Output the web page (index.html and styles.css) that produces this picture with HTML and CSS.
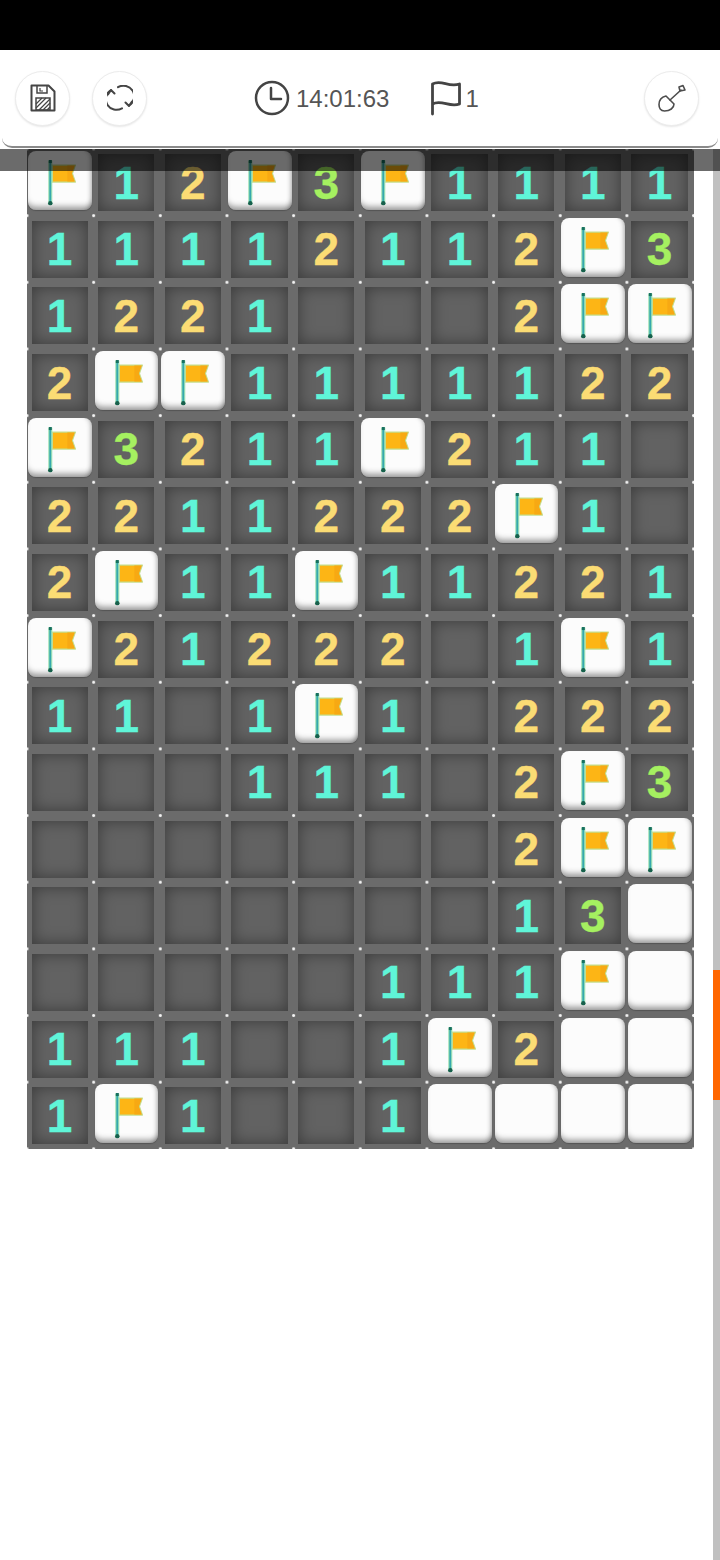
FILE: index.html
```html
<!DOCTYPE html>
<html lang="en">
<head>
    <meta charset="UTF-8" />
    <meta name="viewport" content="width=device-width, initial-scale=1.0" />
    <title>Minesweeper</title>
    <link rel="stylesheet" href="styles.css">
</head>
<body>
    <svg class="defs" width="0" height="0">
        <symbol id="flag" viewBox="0 0 63 59">
            <path d="M24 14h23l-3 8.500 3 8.500H24z" fill="#fdb515" stroke="#c3dd8c" stroke-width="1.300" stroke-linejoin="round" />
            <path d="M39 14.500h7.500l-3 8 3 8H39z" fill="#f7a913" />
            <rect x="20.500" y="10" width="3" height="43" fill="#35a9ad" stroke="#a8e6b4" stroke-width="1" />
            <rect x="20.500" y="9" width="3" height="3" fill="#17705f" />
            <circle cx="22" cy="52" r="2.200" fill="#17604c" />
        </symbol>
    </svg>

    <div class="status-bar"></div>

    <header class="toolbar">
        <button class="round-btn" aria-label="Save">
            <svg width="26" height="28" viewBox="0 0 26 28" fill="none" stroke="#454545" stroke-width="2">
                <path d="M1.500 1.500h17l6 6v19h-23z" stroke-linejoin="round" />
                <path d="M7 2v7h10V2" stroke-width="1.500" />
                <path d="M10 4v3h3" stroke-width="1.200" />
                <rect x="6" y="14" width="14" height="12" stroke-width="1.500" />
                <path d="M6 20l6-6M6 24l10-10M9 26l11-11M13 26l7-7M17 26l3-3" stroke-width="1.200" />
            </svg>
        </button>
        <button class="round-btn" aria-label="Restart">
            <svg width="26" height="26" viewBox="0 0 26 26" fill="none" stroke="#454545" stroke-width="2" stroke-linecap="round" stroke-linejoin="round">
                <path d="M11 2.200A10.500 10.500 0 0 1 22 20.500" />
                <path d="M18.500 17.500l3.500 3.500 3-4.500" />
                <path d="M15 23.300A10.500 10.500 0 0 1 4 5" />
                <path d="M1 9.500l3-4.500 3.500 3.500" />
            </svg>
        </button>

        <div class="game-status">
            <svg width="36" height="36" viewBox="0 0 36 36" fill="none" stroke="#444" stroke-width="2.500" stroke-linecap="round" stroke-linejoin="round">
                <circle cx="18" cy="18" r="16" />
                <path d="M17 8v11h10" />
            </svg>
            <span class="timer">14:01:63</span>
            <svg class="flag-icon" width="32" height="36" viewBox="0 0 32 36" fill="none" stroke="#444" stroke-width="2.800" stroke-linecap="round" stroke-linejoin="round">
                <path d="M2.500 34V4c9-5 16 4 27 0v20c-10 4-18-5-27 0" />
            </svg>
            <span class="flag-count">1</span>
        </div>

        <button class="round-btn shovel-btn" aria-label="Dig">
            <svg width="28" height="28" viewBox="0 0 28 28" fill="none" stroke="#4d4d4d" stroke-width="1.600" stroke-linecap="round" stroke-linejoin="round">
                <path d="M8 12l8 8c0 4-4 7-9.500 7C2.500 27 1 24 1 20.500 1 16 4 13 8 12z" />
                <path d="M12 16L23 6" />
                <path d="M22 7l-1-4 4-1.500L27 6z" />
            </svg>
        </button>
    </header>

    <main class="board">
        <div class="tile"><svg class="flag"><use href="#flag" /></svg></div><div class="open n1">1</div><div class="open n2">2</div><div class="tile"><svg class="flag"><use href="#flag" /></svg></div><div class="open n3">3</div><div class="tile"><svg class="flag"><use href="#flag" /></svg></div><div class="open n1">1</div><div class="open n1">1</div><div class="open n1">1</div><div class="open n1">1</div>

        <div class="open n1">1</div><div class="open n1">1</div><div class="open n1">1</div><div class="open n1">1</div><div class="open n2">2</div><div class="open n1">1</div><div class="open n1">1</div><div class="open n2">2</div><div class="tile"><svg class="flag"><use href="#flag" /></svg></div><div class="open n3">3</div>

        <div class="open n1">1</div><div class="open n2">2</div><div class="open n2">2</div><div class="open n1">1</div><div class="open"></div><div class="open"></div><div class="open"></div><div class="open n2">2</div><div class="tile"><svg class="flag"><use href="#flag" /></svg></div><div class="tile"><svg class="flag"><use href="#flag" /></svg></div>

        <div class="open n2">2</div><div class="tile"><svg class="flag"><use href="#flag" /></svg></div><div class="tile"><svg class="flag"><use href="#flag" /></svg></div><div class="open n1">1</div><div class="open n1">1</div><div class="open n1">1</div><div class="open n1">1</div><div class="open n1">1</div><div class="open n2">2</div><div class="open n2">2</div>

        <div class="tile"><svg class="flag"><use href="#flag" /></svg></div><div class="open n3">3</div><div class="open n2">2</div><div class="open n1">1</div><div class="open n1">1</div><div class="tile"><svg class="flag"><use href="#flag" /></svg></div><div class="open n2">2</div><div class="open n1">1</div><div class="open n1">1</div><div class="open"></div>

        <div class="open n2">2</div><div class="open n2">2</div><div class="open n1">1</div><div class="open n1">1</div><div class="open n2">2</div><div class="open n2">2</div><div class="open n2">2</div><div class="tile"><svg class="flag"><use href="#flag" /></svg></div><div class="open n1">1</div><div class="open"></div>

        <div class="open n2">2</div><div class="tile"><svg class="flag"><use href="#flag" /></svg></div><div class="open n1">1</div><div class="open n1">1</div><div class="tile"><svg class="flag"><use href="#flag" /></svg></div><div class="open n1">1</div><div class="open n1">1</div><div class="open n2">2</div><div class="open n2">2</div><div class="open n1">1</div>

        <div class="tile"><svg class="flag"><use href="#flag" /></svg></div><div class="open n2">2</div><div class="open n1">1</div><div class="open n2">2</div><div class="open n2">2</div><div class="open n2">2</div><div class="open"></div><div class="open n1">1</div><div class="tile"><svg class="flag"><use href="#flag" /></svg></div><div class="open n1">1</div>

        <div class="open n1">1</div><div class="open n1">1</div><div class="open"></div><div class="open n1">1</div><div class="tile"><svg class="flag"><use href="#flag" /></svg></div><div class="open n1">1</div><div class="open"></div><div class="open n2">2</div><div class="open n2">2</div><div class="open n2">2</div>

        <div class="open"></div><div class="open"></div><div class="open"></div><div class="open n1">1</div><div class="open n1">1</div><div class="open n1">1</div><div class="open"></div><div class="open n2">2</div><div class="tile"><svg class="flag"><use href="#flag" /></svg></div><div class="open n3">3</div>

        <div class="open"></div><div class="open"></div><div class="open"></div><div class="open"></div><div class="open"></div><div class="open"></div><div class="open"></div><div class="open n2">2</div><div class="tile"><svg class="flag"><use href="#flag" /></svg></div><div class="tile"><svg class="flag"><use href="#flag" /></svg></div>

        <div class="open"></div><div class="open"></div><div class="open"></div><div class="open"></div><div class="open"></div><div class="open"></div><div class="open"></div><div class="open n1">1</div><div class="open n3">3</div><div class="tile"></div>

        <div class="open"></div><div class="open"></div><div class="open"></div><div class="open"></div><div class="open"></div><div class="open n1">1</div><div class="open n1">1</div><div class="open n1">1</div><div class="tile"><svg class="flag"><use href="#flag" /></svg></div><div class="tile"></div>

        <div class="open n1">1</div><div class="open n1">1</div><div class="open n1">1</div><div class="open"></div><div class="open"></div><div class="open n1">1</div><div class="tile"><svg class="flag"><use href="#flag" /></svg></div><div class="open n2">2</div><div class="tile"></div><div class="tile"></div>

        <div class="open n1">1</div><div class="tile"><svg class="flag"><use href="#flag" /></svg></div><div class="open n1">1</div><div class="open"></div><div class="open"></div><div class="open n1">1</div><div class="tile"></div><div class="tile"></div><div class="tile"></div><div class="tile"></div>
    </main>

    <div class="scrollbar"><div class="scroll-thumb"></div></div>
    <div class="shade"></div>
</body>
</html>
```

FILE: styles.css
```css
body {
    margin: 0;
    height: 1560px;
    overflow: hidden;
    position: relative;
    background: #fff;
    font-family: 'Liberation Sans', Arial, sans-serif;
}

.defs {
    position: absolute;
}

.status-bar {
    height: 50px;
    background: #000;
}

.toolbar {
    display: flex;
    align-items: center;
    height: 96px;
    margin: 0 2px 1px;
    padding: 0 19px 0 13px;
    background: #fff;
    border-bottom: 2px solid #8a8a8a;
    border-radius: 0 0 10px 10px;
    color: #555;
}

.round-btn {
    display: flex;
    align-items: center;
    justify-content: center;
    flex: none;
    width: 55px;
    height: 55px;
    margin-right: 22px;
    padding: 0;
    background: #fff;
    border: 1px solid #ececec;
    border-radius: 50%;
    box-shadow: 0 1px 2px rgba(0,0,0,0.1);
}

.shovel-btn {
    margin: 0 0 0 auto;
}

.game-status {
    display: flex;
    align-items: center;
    margin-left: 85px;
    font-size: 24px;
}

.timer {
    margin: 2px 0 0 6px;
}

.flag-icon {
    margin-left: 41px;
}

.flag-count {
    margin: 2px 0 0 3px;
}

.board {
    display: grid;
    grid-template-columns: repeat(10, 66.667px);
    grid-auto-rows: 66.667px;
    width: 666.67px;
    margin-left: 27px;
    background-color: #6b6b6b;
    background-image: radial-gradient(circle at center, #f2f2f2 1px, transparent 2px);
    background-size: 66.667px 66.667px;
    background-position: -33.333px -33.333px;
}

.open {
    display: flex;
    align-items: center;
    justify-content: center;
    margin: 5px 6px 4.600px 4.500px;
    background: #626262;
    box-shadow: inset 0 0 16px rgba(0,0,0,0.42);
    font-size: 46px;
    font-weight: bold;
    -webkit-text-stroke: 0.3px currentColor;
}

.n1 {
    color: #5ff5d8;
}

.n2 {
    color: #fbdc74;
}

.n3 {
    color: #a5f060;
}

.tile {
    margin: 2px 2px 5.500px 1px;
    background: #fcfcfc;
    border-radius: 8px;
    box-shadow: inset 0 -7px 6px -4px rgba(0,0,0,0.42), inset -5px 0 5px -4px rgba(0,0,0,0.3), 0 1px 1px #555;
}

.flag {
    display: block;
    width: 100%;
    height: 100%;
}

.scrollbar {
    position: absolute;
    top: 149px;
    right: 0;
    bottom: 0;
    width: 7px;
    background: #c0c0c0;
}

.scroll-thumb {
    position: absolute;
    top: 821px;
    left: 0;
    width: 100%;
    height: 130px;
    background: #ff6600;
}

.shade {
    position: absolute;
    top: 149px;
    left: 0;
    width: 100%;
    height: 22px;
    background: rgba(0,0,0,0.58);
}
```
